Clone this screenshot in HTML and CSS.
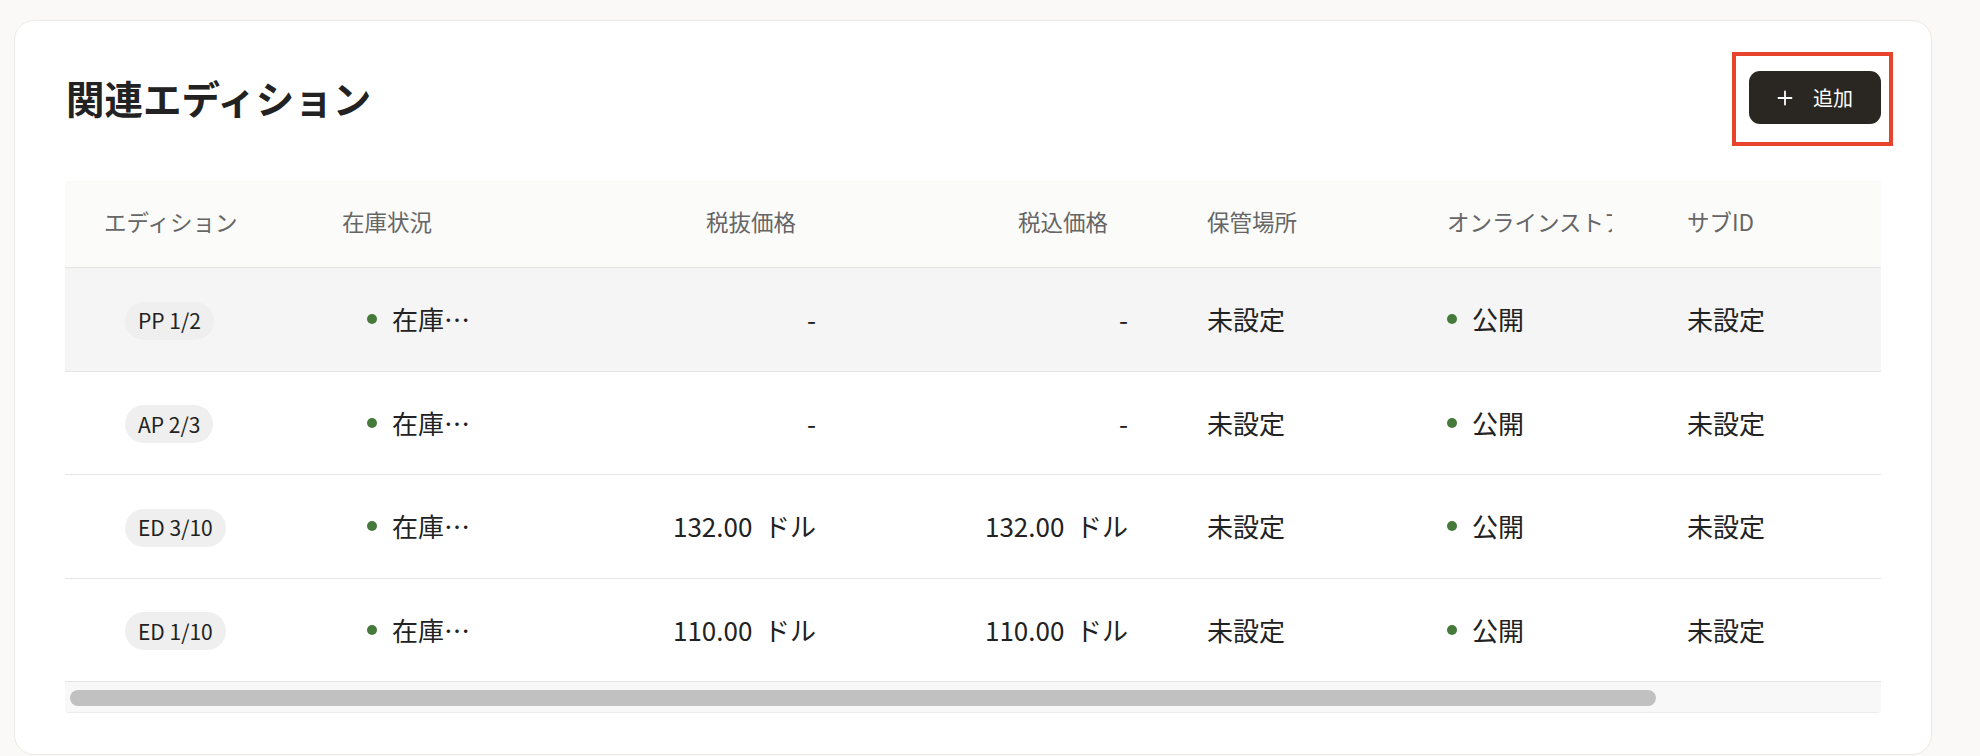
FILE: index.html
```html
<!DOCTYPE html>
<html lang="ja">
<head>
<meta charset="utf-8">
<title>関連エディション</title>
<link rel="stylesheet" href="styles.css">
</head>
<body>
<div class="page">
  <section class="card">
    <header class="card-head">
      <h1 class="title">関連エディション</h1>
      <div class="add-wrap">
        <button class="add-btn" type="button">
          <svg class="add-icon" viewBox="0 0 20 20" width="20" height="20" aria-hidden="true">
            <path d="M10 3.5v13M3.5 10h13" stroke="#fff" stroke-width="1.8" stroke-linecap="round" fill="none"/>
          </svg>
          <span>追加</span>
        </button>
      </div>
    </header>

    <div class="table-wrap">
      <div class="table-scroll">
        <div class="grid">
          <div class="row head">
            <div class="cell c1">エディション</div>
            <div class="cell c2">在庫状況</div>
            <div class="cell c3 num">税抜価格</div>
            <div class="cell c4 num">税込価格</div>
            <div class="cell c5">保管場所</div>
            <div class="cell c6"><span class="clip">オンラインストア</span></div>
            <div class="cell c7">サブID</div>
          </div>

          <div class="row hover">
            <div class="cell c1"><span class="badge">PP 1/2</span></div>
            <div class="cell c2"><span class="dot"></span><span class="ell">在庫あり</span></div>
            <div class="cell c3 num">-</div>
            <div class="cell c4 num">-</div>
            <div class="cell c5">未設定</div>
            <div class="cell c6"><span class="dot"></span><span>公開</span></div>
            <div class="cell c7">未設定</div>
          </div>

          <div class="row">
            <div class="cell c1"><span class="badge">AP 2/3</span></div>
            <div class="cell c2"><span class="dot"></span><span class="ell">在庫あり</span></div>
            <div class="cell c3 num">-</div>
            <div class="cell c4 num">-</div>
            <div class="cell c5">未設定</div>
            <div class="cell c6"><span class="dot"></span><span>公開</span></div>
            <div class="cell c7">未設定</div>
          </div>

          <div class="row">
            <div class="cell c1"><span class="badge">ED 3/10</span></div>
            <div class="cell c2"><span class="dot"></span><span class="ell">在庫あり</span></div>
            <div class="cell c3 num">132.00&nbsp; ドル</div>
            <div class="cell c4 num">132.00&nbsp; ドル</div>
            <div class="cell c5">未設定</div>
            <div class="cell c6"><span class="dot"></span><span>公開</span></div>
            <div class="cell c7">未設定</div>
          </div>

          <div class="row">
            <div class="cell c1"><span class="badge">ED 1/10</span></div>
            <div class="cell c2"><span class="dot"></span><span class="ell">在庫あり</span></div>
            <div class="cell c3 num">110.00&nbsp; ドル</div>
            <div class="cell c4 num">110.00&nbsp; ドル</div>
            <div class="cell c5">未設定</div>
            <div class="cell c6"><span class="dot"></span><span>公開</span></div>
            <div class="cell c7">未設定</div>
          </div>
        </div>
      </div>
      <div class="hscroll" aria-hidden="true">
        <div class="hscroll-thumb"></div>
      </div>
    </div>
  </section>
</div>
</body>
</html>
```

FILE: styles.css
```css
* { box-sizing: border-box; }

html, body {
  margin: 0;
  padding: 0;
  background: #faf9f7;
  font-family: "Noto Sans CJK JP", "Noto Sans", sans-serif;
  color: #222;
}

.page {
  padding: 20px 48px 0 14px;
}

.card {
  background: #fff;
  border: 1px solid #ebeae7;
  border-radius: 20px;
  padding: 50px 50px 41px 50px;
}

.card-head {
  display: flex;
  align-items: center;
  justify-content: space-between;
  height: 53px;
  margin-bottom: 57px;
}

.title {
  margin: 0 0 0 1px;
  font-size: 38.5px;
  font-weight: 700;
  line-height: 1;
  color: #222;
}

.add-wrap {
  position: relative;
}

.add-wrap::after {
  content: "";
  position: absolute;
  left: -17px;
  right: -12px;
  top: -19px;
  bottom: -22px;
  border: 4px solid #e8432d;
  pointer-events: none;
}

.add-btn {
  display: flex;
  align-items: center;
  gap: 18px;
  height: 53px;
  padding: 0 28px 0 26px;
  border: none;
  border-radius: 11px;
  background: #2a2723;
  color: #fff;
  font-family: inherit;
  font-size: 20px;
  line-height: 1;
  cursor: pointer;
}

.add-icon {
  display: block;
  width: 20px;
  height: 20px;
}

.table-wrap {
  border-bottom: 1px solid #ececec;
  border-radius: 0 0 4px 4px;
  overflow: hidden;
}

.table-scroll {
  overflow: hidden;
}

.hscroll {
  height: 30px;
  padding: 8px 5px 6px 5px;
  background: #f8f8f8;
}

.hscroll-thumb {
  width: 1586px;
  height: 16px;
  border-radius: 8px;
  background: #c1c1c1;
}

.grid {
  width: 2065px;
}

.row {
  display: grid;
  grid-template-columns: 257px 179px 335px 351px 240px 240px 463px;
  align-items: center;
  height: 103.5px;
  border-bottom: 1px solid #e4e4e4;
  font-size: 26px;
  color: #222;
}

.row.head {
  height: 87px;
  padding-bottom: 4px;
  background: #fbfbfa;
  font-size: 22.5px;
  color: #666;
}

.row.hover {
  background: #f5f5f5;
}

.cell {
  padding: 0 20px;
  white-space: nowrap;
  overflow: hidden;
  line-height: 1.4;
}

.num { text-align: right; }

.c1 { padding-left: 60px; }
.head .c1 { padding-left: 39px; }

.c2 {
  display: flex;
  align-items: center;
  gap: 15px;
  padding-left: 45px;
}
.head .c2 { display: block; padding-left: 20px; }

.ell {
  min-width: 0;
  overflow: hidden;
  text-overflow: ellipsis;
}

.head .c3 { padding-right: 40px; }
.c4 { padding-right: 59px; }
.head .c4 { padding-right: 79px; }

.c6 {
  display: flex;
  align-items: center;
  gap: 15px;
}
.head .c6 { display: block; }

.clip {
  display: block;
  width: 165px;
  overflow: hidden;
  text-overflow: clip;
}

.badge {
  display: inline-flex;
  align-items: center;
  height: 38px;
  padding: 0 13px;
  border-radius: 19px;
  background: #efefef;
  font-size: 21px;
  color: #222;
  vertical-align: middle;
}

.dot {
  flex: none;
  width: 10px;
  height: 10px;
  border-radius: 50%;
  background: #467a3a;
}
```
